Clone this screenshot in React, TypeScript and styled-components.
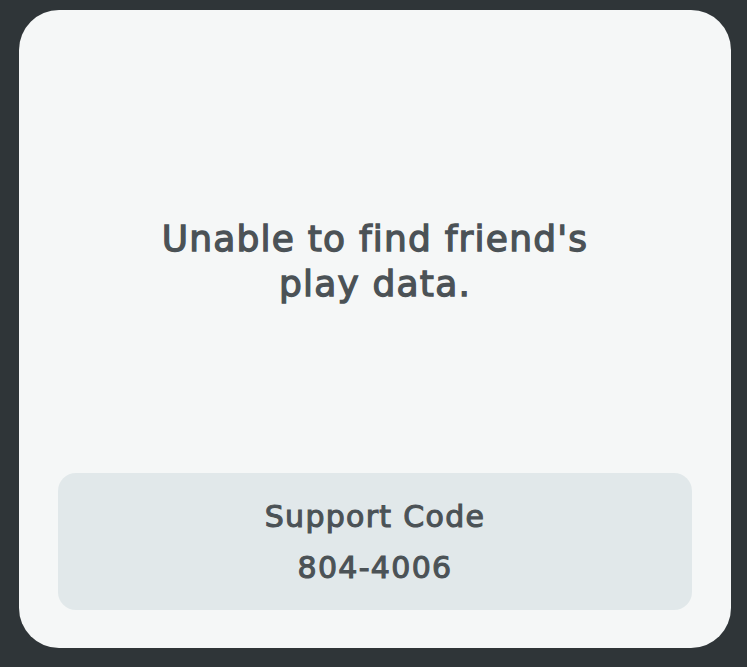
import React from "react";
import styled, { createGlobalStyle } from "styled-components";

const Global = createGlobalStyle`
  html, body { margin: 0; padding: 0; background: #2f3538; }
  body { width: 747px; height: 667px; overflow: hidden; }
`;

const Screen = styled.div`
  box-sizing: border-box;
  width: 747px;
  height: 667px;
  padding: 10px 16px 19px 19px;
  background: #2f3538;
  display: flex;
`;

const Card = styled.div`
  box-sizing: border-box;
  flex: 1;
  background: #f5f7f7;
  border-radius: 40px;
  display: flex;
  flex-direction: column;
  padding: 0 39px 38px 39px;
  font-family: "DejaVu Sans", "Noto Sans", sans-serif;
  font-variant-ligatures: none;
  color: #4b5256;
  -webkit-text-stroke: 1.3px #4b5256;
`;

const Message = styled.div`
  flex: 1;
  display: flex;
  align-items: center;
  justify-content: center;
  text-align: center;
  font-size: 36px;
  font-weight: 400;
  letter-spacing: 1.2px;
  line-height: 45px;
  padding-top: 38px;
`;

const CodeBox = styled.div`
  height: 137px;
  background: #e1e8ea;
  border-radius: 18px;
  display: flex;
  flex-direction: column;
  align-items: center;
  justify-content: center;
  gap: 2px;
`;

const CodeLine = styled.div`
  font-size: 30px;
  font-weight: 400;
  letter-spacing: 1.3px;
  line-height: 49px;
  -webkit-text-stroke: 1.1px #4b5256;
`;

export default function App() {
  return (
    <>
      <Global />
      <Screen>
        <Card>
          <Message>
            Unable to find friend's
            <br />
            play data.
          </Message>
          <CodeBox>
            <CodeLine>Support Code</CodeLine>
            <CodeLine>804-4006</CodeLine>
          </CodeBox>
        </Card>
      </Screen>
    </>
  );
}
